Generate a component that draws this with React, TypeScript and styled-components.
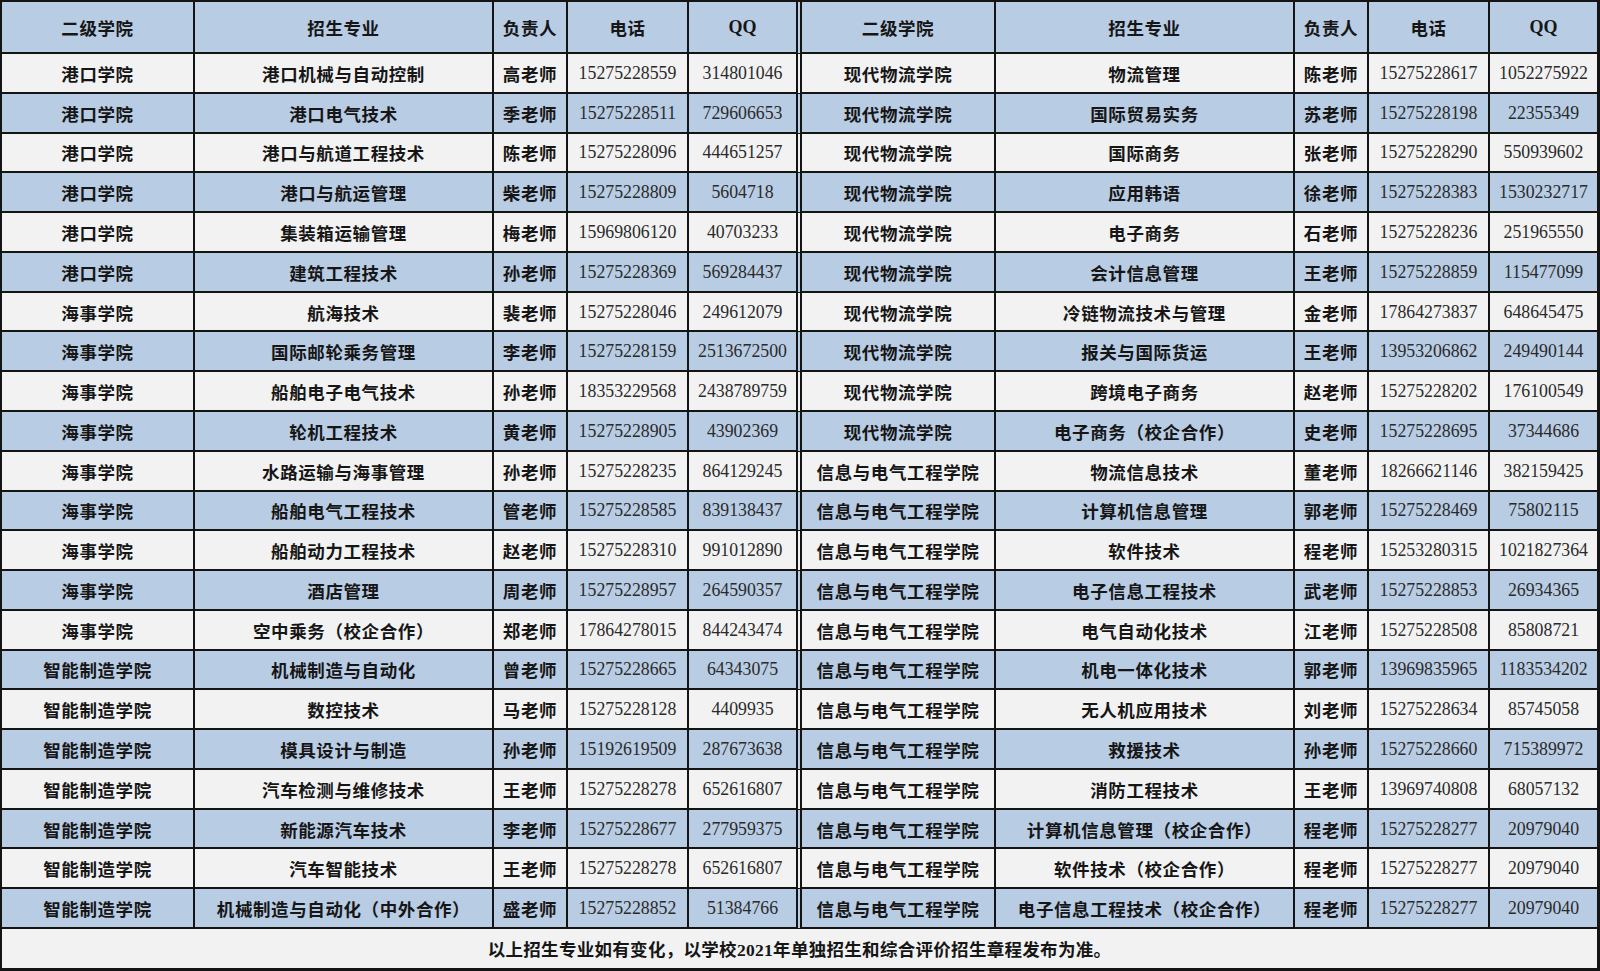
import styled, { createGlobalStyle } from "styled-components";

type Row = [string, string, string, string, string];

const leftRows: Row[] = [
  ["港口学院", "港口机械与自动控制", "高老师", "15275228559", "314801046"],
  ["港口学院", "港口电气技术", "季老师", "15275228511", "729606653"],
  ["港口学院", "港口与航道工程技术", "陈老师", "15275228096", "444651257"],
  ["港口学院", "港口与航运管理", "柴老师", "15275228809", "5604718"],
  ["港口学院", "集装箱运输管理", "梅老师", "15969806120", "40703233"],
  ["港口学院", "建筑工程技术", "孙老师", "15275228369", "569284437"],
  ["海事学院", "航海技术", "裴老师", "15275228046", "249612079"],
  ["海事学院", "国际邮轮乘务管理", "李老师", "15275228159", "2513672500"],
  ["海事学院", "船舶电子电气技术", "孙老师", "18353229568", "2438789759"],
  ["海事学院", "轮机工程技术", "黄老师", "15275228905", "43902369"],
  ["海事学院", "水路运输与海事管理", "孙老师", "15275228235", "864129245"],
  ["海事学院", "船舶电气工程技术", "管老师", "15275228585", "839138437"],
  ["海事学院", "船舶动力工程技术", "赵老师", "15275228310", "991012890"],
  ["海事学院", "酒店管理", "周老师", "15275228957", "264590357"],
  ["海事学院", "空中乘务（校企合作）", "郑老师", "17864278015", "844243474"],
  ["智能制造学院", "机械制造与自动化", "曾老师", "15275228665", "64343075"],
  ["智能制造学院", "数控技术", "马老师", "15275228128", "4409935"],
  ["智能制造学院", "模具设计与制造", "孙老师", "15192619509", "287673638"],
  ["智能制造学院", "汽车检测与维修技术", "王老师", "15275228278", "652616807"],
  ["智能制造学院", "新能源汽车技术", "李老师", "15275228677", "277959375"],
  ["智能制造学院", "汽车智能技术", "王老师", "15275228278", "652616807"],
  ["智能制造学院", "机械制造与自动化（中外合作）", "盛老师", "15275228852", "51384766"],
];

const rightRows: Row[] = [
  ["现代物流学院", "物流管理", "陈老师", "15275228617", "1052275922"],
  ["现代物流学院", "国际贸易实务", "苏老师", "15275228198", "22355349"],
  ["现代物流学院", "国际商务", "张老师", "15275228290", "550939602"],
  ["现代物流学院", "应用韩语", "徐老师", "15275228383", "1530232717"],
  ["现代物流学院", "电子商务", "石老师", "15275228236", "251965550"],
  ["现代物流学院", "会计信息管理", "王老师", "15275228859", "115477099"],
  ["现代物流学院", "冷链物流技术与管理", "金老师", "17864273837", "648645475"],
  ["现代物流学院", "报关与国际货运", "王老师", "13953206862", "249490144"],
  ["现代物流学院", "跨境电子商务", "赵老师", "15275228202", "176100549"],
  ["现代物流学院", "电子商务（校企合作）", "史老师", "15275228695", "37344686"],
  ["信息与电气工程学院", "物流信息技术", "董老师", "18266621146", "382159425"],
  ["信息与电气工程学院", "计算机信息管理", "郭老师", "15275228469", "75802115"],
  ["信息与电气工程学院", "软件技术", "程老师", "15253280315", "1021827364"],
  ["信息与电气工程学院", "电子信息工程技术", "武老师", "15275228853", "26934365"],
  ["信息与电气工程学院", "电气自动化技术", "江老师", "15275228508", "85808721"],
  ["信息与电气工程学院", "机电一体化技术", "郭老师", "13969835965", "1183534202"],
  ["信息与电气工程学院", "无人机应用技术", "刘老师", "15275228634", "85745058"],
  ["信息与电气工程学院", "救援技术", "孙老师", "15275228660", "715389972"],
  ["信息与电气工程学院", "消防工程技术", "王老师", "13969740808", "68057132"],
  ["信息与电气工程学院", "计算机信息管理（校企合作）", "程老师", "15275228277", "20979040"],
  ["信息与电气工程学院", "软件技术（校企合作）", "程老师", "15275228277", "20979040"],
  ["信息与电气工程学院", "电子信息工程技术（校企合作）", "程老师", "15275228277", "20979040"],
];

const headers = ["二级学院", "招生专业", "负责人", "电话", "QQ"];

const BLUE = "#b8cce4";
const GRAY = "#f2f2f2";
const LINE = "#141414";

const GlobalStyle = createGlobalStyle`
  html, body {
    margin: 0;
    padding: 0;
    background: #fff;
  }
  body {
    font-family: "Liberation Serif", "Noto Sans CJK SC", serif;
  }
`;

const Sheet = styled.div`
  box-sizing: border-box;
  width: 1600px;
  height: 971px;
  display: grid;
  grid-template-columns: 193px 299px 74px 121px 107px 200px 299px 74px 121px 107px;
  grid-template-rows: 52px repeat(22, 1fr) 39px;
  border-style: solid;
  border-color: ${LINE};
  border-width: 2px 3px 3px 2px;
  background: ${GRAY};
`;

const Cell = styled.div<{
  $blue?: boolean;
  $bold?: boolean;
  $split?: boolean;
  $edge?: boolean;
}>`
  box-sizing: border-box;
  display: flex;
  align-items: center;
  justify-content: center;
  overflow: hidden;
  white-space: nowrap;
  background: ${(p) => (p.$blue ? BLUE : GRAY)};
  border-bottom: 2px solid ${LINE};
  border-right: ${(p) => (p.$edge ? "none" : `2px solid ${LINE}`)};
  border-left: ${(p) => (p.$split ? `6px double ${LINE}` : "none")};
  color: ${(p) => (p.$bold ? "#161616" : "#2a2a2a")};
  font-size: ${(p) => (p.$bold ? "17.5px" : "17.8px")};
  font-weight: ${(p) => (p.$bold ? 700 : 400)};
  letter-spacing: ${(p) => (p.$bold ? "0.6px" : "0")};
  padding-top: 1px;
`;

const HeadCell = styled(Cell)<{ $latin?: boolean }>`
  font-weight: 700;
  font-size: ${(p) => (p.$latin ? "18px" : "17.5px")};
  color: #161616;
  letter-spacing: ${(p) => (p.$latin ? "0" : "0.6px")};
  padding-top: 0;
`;

const Footer = styled.div`
  grid-column: 1 / -1;
  display: flex;
  align-items: center;
  justify-content: center;
  background: ${GRAY};
  color: #161616;
  font-size: 17.5px;
  font-weight: 700;
  letter-spacing: 0.3px;
`;

function HalfRow({ row, blue, split }: { row: Row; blue: boolean; split: boolean }) {
  return (
    <>
      {row.map((value, i) => (
        <Cell
          key={i}
          $blue={blue}
          $bold={i < 3}
          $split={split && i === 0}
          $edge={i === 4}
        >
          {value}
        </Cell>
      ))}
    </>
  );
}

function HalfPair({ left, right, blue }: { left: Row; right: Row; blue: boolean }) {
  return (
    <>
      <HalfRow row={left} blue={blue} split={false} />
      <HalfRow row={right} blue={blue} split />
    </>
  );
}

export default function App() {
  return (
    <>
      <GlobalStyle />
      <Sheet>
        {[0, 1].map((half) =>
          headers.map((h, i) => (
            <HeadCell
              key={`${half}-${h}`}
              $blue
              $bold
              $latin={i === 4}
              $split={half === 1 && i === 0}
              $edge={i === 4}
            >
              {h}
            </HeadCell>
          ))
        )}
        {leftRows.map((row, r) => (
          <HalfPair key={r} left={row} right={rightRows[r]} blue={r % 2 === 1} />
        ))}
        <Footer>以上招生专业如有变化，以学校2021年单独招生和综合评价招生章程发布为准。</Footer>
      </Sheet>
    </>
  );
}
